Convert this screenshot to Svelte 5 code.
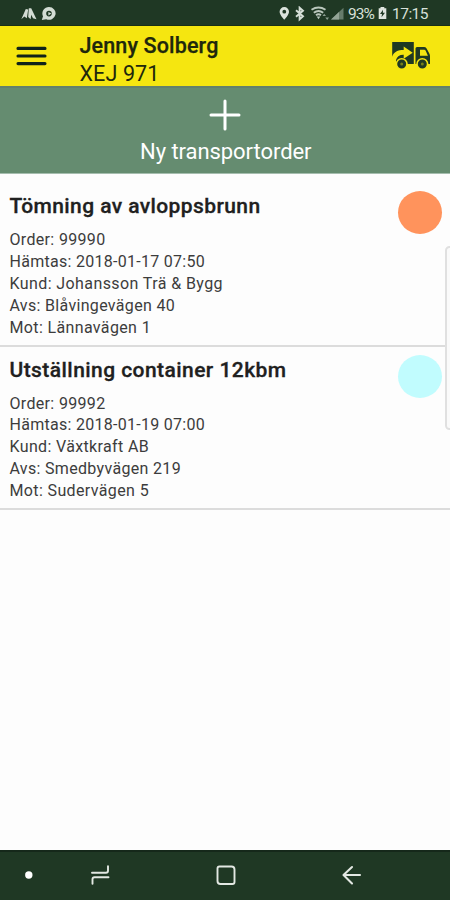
<script>
  const orders = [
    {
      title: 'Tömning av avloppsbrunn', color: '#ff935c', width: 251,
      rows: [['Order: 99990', 96], ['Hämtas: 2018-01-17 07:50', 195.5], ['Kund: Johansson Trä & Bygg', 213.5], ['Avs: Blåvingevägen 40', 165.5], ['Mot: Lännavägen 1', 141.5]]
    },
    {
      title: 'Utställning container 12kbm', color: '#c1fcfe', width: 277,
      rows: [['Order: 99992', 96], ['Hämtas: 2018-01-19 07:00', 195.5], ['Kund: Växtkraft AB', 139.5], ['Avs: Smedbyvägen 219', 171.5], ['Mot: Sudervägen 5', 139.5]]
    }
  ];

  // Adjusts tracking so a label fills its intended line width.
  function fit(node, width) {
    const range = document.createRange();
    range.selectNodeContents(node);
    const natural = range.getBoundingClientRect().width;
    node.style.letterSpacing = `${(width - natural) / node.textContent.length}px`;
  }
</script>

<div class="phone">
  <div class="status">
    <svg class="notices" width="38" height="16" viewBox="0 0 38 16" fill="#d3dcd4">
      <path d="M.3 13.2 4.8 3 7.2 3.4 5.8 12.2 3.4 10.5ZM7.8 2.3 10.2 2.3 15.5 13.2 12 12.2 10.2 8.7 9.6 13.2 7.2 11Z" />
      <path fill-rule="evenodd" d="M28 1a6.6 6.4 0 1 1-2.8 12.2L20.8 14l1.2-3.8A6.6 6.4 0 0 1 28 1Zm0 3.8a2.8 2.8 0 1 0 0 5.6 2.8 2.8 0 0 0 0-5.6Z" />
      <path d="m27.4 6 3 1.6-3 1.8Z" />
    </svg>
    <div class="system">
      <svg width="66" height="16" viewBox="0 0 66 16">
        <path fill="#dce3dd" fill-rule="evenodd" d="M5.3 1A4.7 4.7 0 0 0 .6 5.7c0 3.2 4.7 8 4.7 8s4.7-4.8 4.7-8A4.7 4.7 0 0 0 5.3 1Zm0 2.8a1.9 1.9 0 1 1 0 3.8 1.9 1.9 0 0 1 0-3.8Z" />
        <path d="m17 4.3 7 6-3.4 3V1.7l3.4 3-7 6" fill="none" stroke="#d5ded7" stroke-width="1.9" />
        <g fill="none" stroke="#bac7bd" stroke-width="1.9">
          <path d="M32.5 3.8q7-4.5 14 0M34.8 6.7q4.7-3.5 9.4 0M37 9.3q2.5-2 5 0" />
        </g>
        <path fill="#bac7bd" d="m37.7 10.5 1.8 2.8 1.8-2.8Z" />
        <path fill="#8b9d90" d="m43.5 10 1.7-2.2L47 10Zm2.8 1.5H50l-1.8 2.4Z" />
        <path fill="#667b6b" d="M52 13.5 64.5 1.8v11.7Z" />
        <path fill="#93a496" d="M52 13.5 60 6v7.5Z" />
      </svg>
      <span class="battery"><span use:fit={26}>93%</span></span>
      <svg class="cell" width="9" height="14" viewBox="0 0 9 14"><path fill="#dfe5df" d="M2.5 1h3.8v1.3h2V13H.7V2.3h1.8Z" /><path fill="#1f3824" d="M5 3.8 2 8h2l-.5 3.3L7 6.8H4.9Z" /></svg>
      <span class="clock"><span use:fit={36}>17:15</span></span>
    </div>
  </div>

  <header>
    <svg class="menu" width="32" height="22" viewBox="0 0 32 22"><path d="M3 3.4h27M3 11h27M3 18.6h27" stroke="#102319" stroke-width="3.1" stroke-linecap="round" /></svg>
    <div class="driver">
      <div class="name"><span use:fit={139}>Jenny Solberg</span></div>
      <div class="reg"><span use:fit={80}>XEJ 971</span></div>
    </div>
    <svg class="truck" width="40" height="30" viewBox="0 0 40 30">
      <path fill="#1f3923" d="M.2 2h21.6v22H.2ZM23.5 8.5q0-1.5 1.5-1.5h7q1.6 0 2.6 1.4l2.7 5q.7 1 .7 2.6V24H23.5Z" />
      <path fill="#f5e610" d="M28 9.8h4.2q1 0 1.5 1l2.2 5H28ZM-1 19.5C1 12.5 4.5 10 11.7 10V6.5l9 6.3-9 6v-4C8 14.6 5 16.5 4 20v5h-5Z" />
      <g fill="#1f3923" stroke="#f5e610" stroke-width="1.6"><circle cx="9.7" cy="24" r="5.3" /><circle cx="30.3" cy="24" r="5.3" /></g>
      <g fill="#768019"><circle cx="9.7" cy="24" r="1.5" /><circle cx="30.3" cy="24" r="1.5" /></g>
    </svg>
  </header>

  <div class="new-order">
    <svg width="32" height="32" viewBox="0 0 32 32"><path d="M16 2v28M2 16h28" stroke="#fff" stroke-width="3" stroke-linecap="round" /></svg>
    <div><span use:fit={171.5}>Ny transportorder</span></div>
  </div>

  <main>
    {#each orders as order}
      <article>
        <div class="details">
          <h2><span use:fit={order.width}>{order.title}</span></h2>
          {#each order.rows as row}
            <p><span use:fit={row[1]}>{row[0]}</span></p>
          {/each}
        </div>
        <i class="dot" style:background={order.color}></i>
      </article>
    {/each}
    <div class="edge"></div>
  </main>

  <nav>
    <svg width="450" height="48" viewBox="0 0 450 48" fill="none" stroke="#e3e8e3" stroke-width="1.9" stroke-linecap="round" stroke-linejoin="round">
      <circle cx="28.8" cy="23" r="3.7" fill="#fff" stroke="none" />
      <path d="M92 20.8h14q2 0 2-2v-4.5M108.5 25.2H94.5q-2 0-2 2v4.6" />
      <path d="M219.5 14.5h12q3 0 3 3v12.5q0 2-2 2h-12q-3 0-3-3v-12.5q0-2 2-2Z" />
      <path d="M360 23h-16m8-8-8.5 8 8.5 8.5" stroke-width="2.1" />
    </svg>
  </nav>
</div>

<style>
  :global(body) { margin: 0; }
  .phone { width: 450px; height: 900px; display: flex; flex-direction: column; overflow: hidden; background: #fdfdfd; font-family: Roboto, 'Liberation Sans', sans-serif; }
  span { white-space: nowrap; }
  .status { box-sizing: border-box; height: 26px; background: #1f3824; border-bottom: 1px solid #192f16; display: flex; justify-content: space-between; padding: 6px 22px 0 21px; flex: none; }
  .system { display: flex; color: #d8e0d9; font-size: 15.5px; line-height: 17px; }
  .system svg { flex: none; }
  .battery { width: 26px; margin-left: 3px; }
  .cell { margin: 0 5px 0 4px; }
  .clock { width: 36px; }
  header { box-sizing: border-box; height: 60px; flex: none; background: #f5e610; display: flex; align-items: flex-start; padding: 0 18px 0 15px; color: #20270c; }
  .menu { margin-top: 19px; }
  .driver { margin-left: 32.5px; flex: 1; padding-top: 6px; }
  .name, .reg { font-size: 21.5px; line-height: 28px; }
  .name { font-weight: 500; -webkit-text-stroke: .25px; }
  .truck { margin-top: 14px; }
  .new-order { box-sizing: border-box; height: 88px; flex: none; border-top: 2px solid #63816a; border-bottom: 1px solid #a5bdae; background: #658c70; color: #fff; display: flex; flex-direction: column; align-items: center; padding-top: 11px; font-size: 22px; line-height: 30px; }
  .new-order div { margin-top: 6px; width: 170px; }
  main { flex: 1; position: relative; }
  article { box-sizing: border-box; height: 163px; border-bottom: 2px solid #dcdcdc; padding: 8px 9px 0 9.5px; display: flex; justify-content: space-between; }
  article:first-child { height: 172.5px; padding-top: 17px; }
  h2 { margin: 0 0 8px; font-size: 21px; line-height: 30px; font-weight: 500; color: #202020; -webkit-text-stroke: .3px; }
  p { margin: 0; font-size: 16px; line-height: 21.9px; color: #3c3c3c; }
  .dot { width: 44px; height: 43px; border-radius: 50%; flex: none; margin-right: -1px; }
  .edge { position: absolute; box-sizing: border-box; right: -4px; top: 72px; width: 9px; height: 184px; border: 2px solid #e0e0e0; border-radius: 5px; background: #fafafa; }
  nav { box-sizing: border-box; height: 50px; flex: none; border-top: 2px solid #15281a; background: #1f3824; }
  nav svg { display: block; }
</style>
